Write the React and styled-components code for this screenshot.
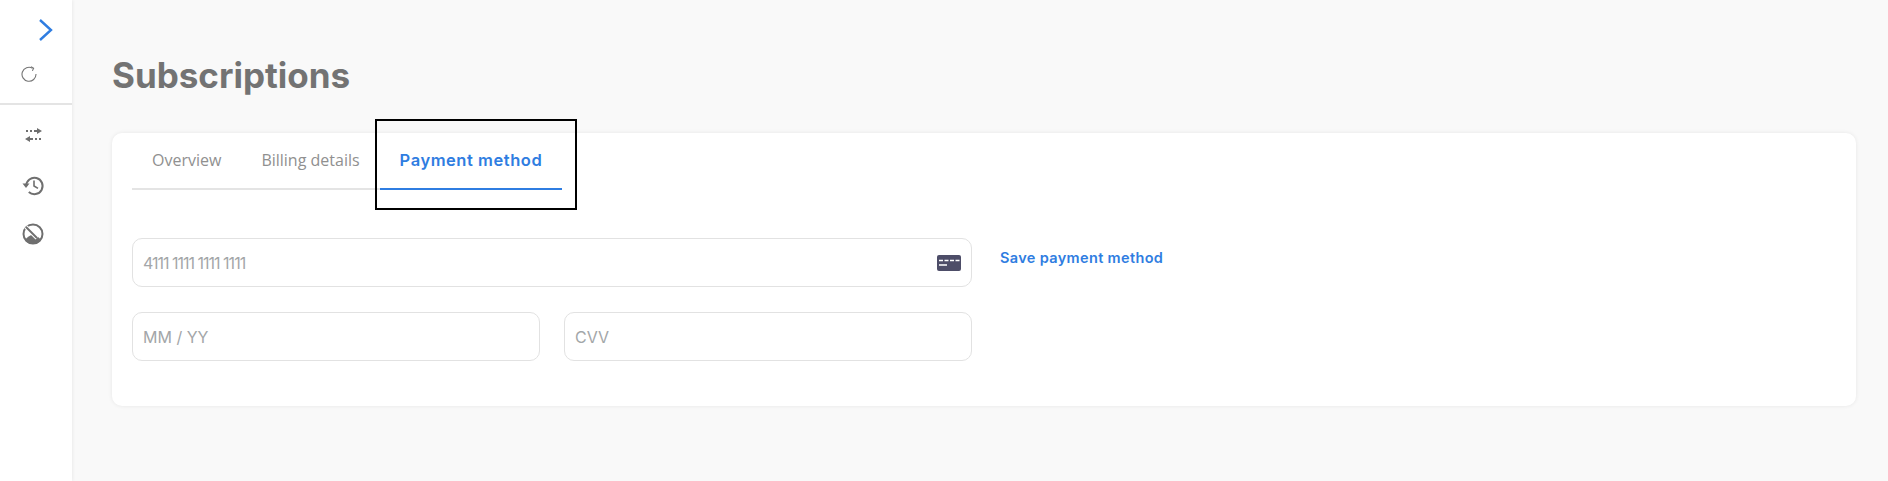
import React from 'react';
import styled, { createGlobalStyle } from 'styled-components';

const GlobalStyle = createGlobalStyle`
  html, body {
    margin: 0;
    height: 100%;
    background: #f9f9f9;
    font-family: "Open Sans", sans-serif;
  }
`;

const Page = styled.div`
  display: flex;
  height: 481px;
  overflow: hidden;
`;

const Sidebar = styled.aside`
  width: 72px;
  flex: none;
  background: #fff;
  box-shadow: 1px 0 3px rgba(0, 0, 0, 0.06);
`;

const SidebarTop = styled.div`
  height: 105px;
  border-bottom: 2px solid #e4e4e4;
  box-sizing: border-box;
  display: flex;
  flex-direction: column;
`;

const Toggle = styled.div`
  height: 48px;
  display: flex;
  align-items: center;
  padding-left: 38px;
  padding-top: 12px;
  box-sizing: border-box;
`;

const Refresh = styled.div`
  display: flex;
  padding: 18px 0 0 21px;
`;

const SideNav = styled.nav`
  display: flex;
  flex-direction: column;
  gap: 25.5px;
  padding: 18px 0 0 21px;
`;

const NavIcon = styled.div`
  width: 24px;
  height: 24px;
`;

const Main = styled.main`
  flex: 1;
  padding: 50px 32px 0 40px;
  min-width: 0;
`;

const Title = styled.h1`
  margin: 0 0 33px;
  font-family: Inter, sans-serif;
  font-weight: 700;
  font-size: 35px;
  line-height: 50px;
  color: #737373;
`;

const Card = styled.section`
  position: relative;
  height: 273px;
  box-sizing: border-box;
  background: #fff;
  border-radius: 10px;
  box-shadow: 0 0 4px rgba(0, 0, 0, 0.08);
  padding: 0 20px;
`;

const Tabs = styled.div`
  display: flex;
  width: 430px;
  height: 57px;
  box-sizing: border-box;
  border-bottom: 2px solid #e4e4e4;
`;

const Tab = styled.div`
  flex: none;
  height: 57px;
  box-sizing: border-box;
  display: flex;
  align-items: center;
  justify-content: center;
  padding: 0 20px 2px;
  white-space: nowrap;
  font-size: ${p => p.$active ? '16.5px' : '16px'};
  font-family: ${p => p.$active ? 'Inter, sans-serif' : '"Open Sans", sans-serif'};
  font-weight: ${p => p.$active ? 600 : 400};
  letter-spacing: ${p => p.$active ? '0.55px' : '0'};
  color: ${p => p.$active ? '#2f7de1' : '#909090'};
  border-bottom: 2px solid ${p => p.$active ? '#2f7de1' : 'transparent'};
`;

const Highlight = styled.div`
  position: absolute;
  left: 263px;
  top: -14px;
  width: 202px;
  height: 91px;
  box-sizing: border-box;
  border: 2px solid #000;
`;

const FormArea = styled.div`
  display: flex;
  gap: 28px;
  padding-top: 48px;
`;

const Fields = styled.div`
  width: 840px;
  display: flex;
  flex-direction: column;
  gap: 25px;
`;

const Row = styled.div`
  display: flex;
  gap: 24px;
`;

const Field = styled.div`
  flex: 1 0 49px;
  height: 49px;
  box-sizing: border-box;
  display: flex;
  align-items: center;
  justify-content: space-between;
  padding: 0 10px;
  border: 1px solid #e2e2e2;
  border-radius: 10px;
  font-family: Inter, sans-serif;
  font-size: 16px;
  color: #a3a6a8;
`;

const Placeholder = styled.span`
  letter-spacing: ${p => p.$tight ? '-1px' : '0'};
`;

const SaveLink = styled.a`
  font-family: Inter, sans-serif;
  font-weight: 600;
  font-size: 14.5px;
  letter-spacing: 0.35px;
  line-height: 20px;
  color: #2f7de1;
  padding-top: 10px;
`;

const ChevronIcon = () => (
  <svg width="16" height="24" viewBox="0 0 16 24" fill="none">
    <path d="M2 2l11 10-11 10" stroke="#2f7de1" strokeWidth="2.4" />
  </svg>
);

const RefreshIcon = () => (
  <svg width="16" height="16" viewBox="0 0 16 16" fill="none" stroke="#757575" strokeWidth="1.1">
    <path d="M11.5 2.2A7 7 0 1 0 15 8" />
    <path d="M10 .6l2.6 1.6-1.2 2.7" />
  </svg>
);

const TransferIcon = () => (
  <svg viewBox="0 0 24 24" width="24" height="24" fill="#6f6f6f">
    <path d="M16 5l5 3-5 3zM9 13l-5 3 5 3z" />
    <path d="M5 7h2v2H5zM9 7h2v2H9zM13 7h3v2h-3zM9 15h3v2H9zM14 15h2v2h-2zM18 15h2v2h-2z" />
  </svg>
);

const HistoryIcon = () => (
  <svg viewBox="0 0 24 24" width="24" height="24" fill="none" stroke="#6f6f6f" strokeWidth="2">
    <path d="M5.2 13a8.2 8.2 0 1 1 2.6 6" />
    <path d="M1.5 10.5h7L5 15z" fill="#6f6f6f" stroke="none" />
    <path d="M13 7.5V13l4 2.4" strokeWidth="1.6" />
  </svg>
);

const NoSignalIcon = () => (
  <svg viewBox="0 0 24 24" width="24" height="24" fill="none">
    <circle cx="12" cy="12" r="9.5" stroke="#6f6f6f" strokeWidth="2" />
    <path d="M4 18c2-3 5-5 8-5 3 0 6 2 8 5-2 3-5 4-8 4s-6-1-8-4z" fill="#6f6f6f" />
    <path d="M5 5l11 11" stroke="#fff" strokeWidth="4" />
    <path d="M5 5l11 11" stroke="#6f6f6f" strokeWidth="2" />
  </svg>
);

const CardIcon = () => (
  <svg width="24" height="16" viewBox="0 0 24 16">
    <rect width="24" height="16" rx="2" fill="#4d4d68" />
    <path d="M2 5.5h4M7.5 5.5h4M13 5.5h4M18.5 5.5h4M2 10h8" stroke="#fff" strokeWidth="1.6" />
  </svg>
);

export default function App() {
  return (
    <Page>
      <GlobalStyle />
      <Sidebar>
        <SidebarTop>
          <Toggle><ChevronIcon /></Toggle>
          <Refresh><RefreshIcon /></Refresh>
        </SidebarTop>
        <SideNav>
          <NavIcon><TransferIcon /></NavIcon>
          <NavIcon><HistoryIcon /></NavIcon>
          <NavIcon><NoSignalIcon /></NavIcon>
        </SideNav>
      </Sidebar>
      <Main>
        <Title>Subscriptions</Title>
        <Card>
          <Tabs>
            <Tab>Overview</Tab>
            <Tab>Billing details</Tab>
            <Tab $active>Payment method</Tab>
          </Tabs>
          <Highlight />
          <FormArea>
            <Fields>
              <Field><Placeholder $tight>4111 1111 1111 1111</Placeholder><CardIcon /></Field>
              <Row>
                <Field><Placeholder>MM / YY</Placeholder></Field>
                <Field><Placeholder>CVV</Placeholder></Field>
              </Row>
            </Fields>
            <SaveLink>Save payment method</SaveLink>
          </FormArea>
        </Card>
      </Main>
    </Page>
  );
}
